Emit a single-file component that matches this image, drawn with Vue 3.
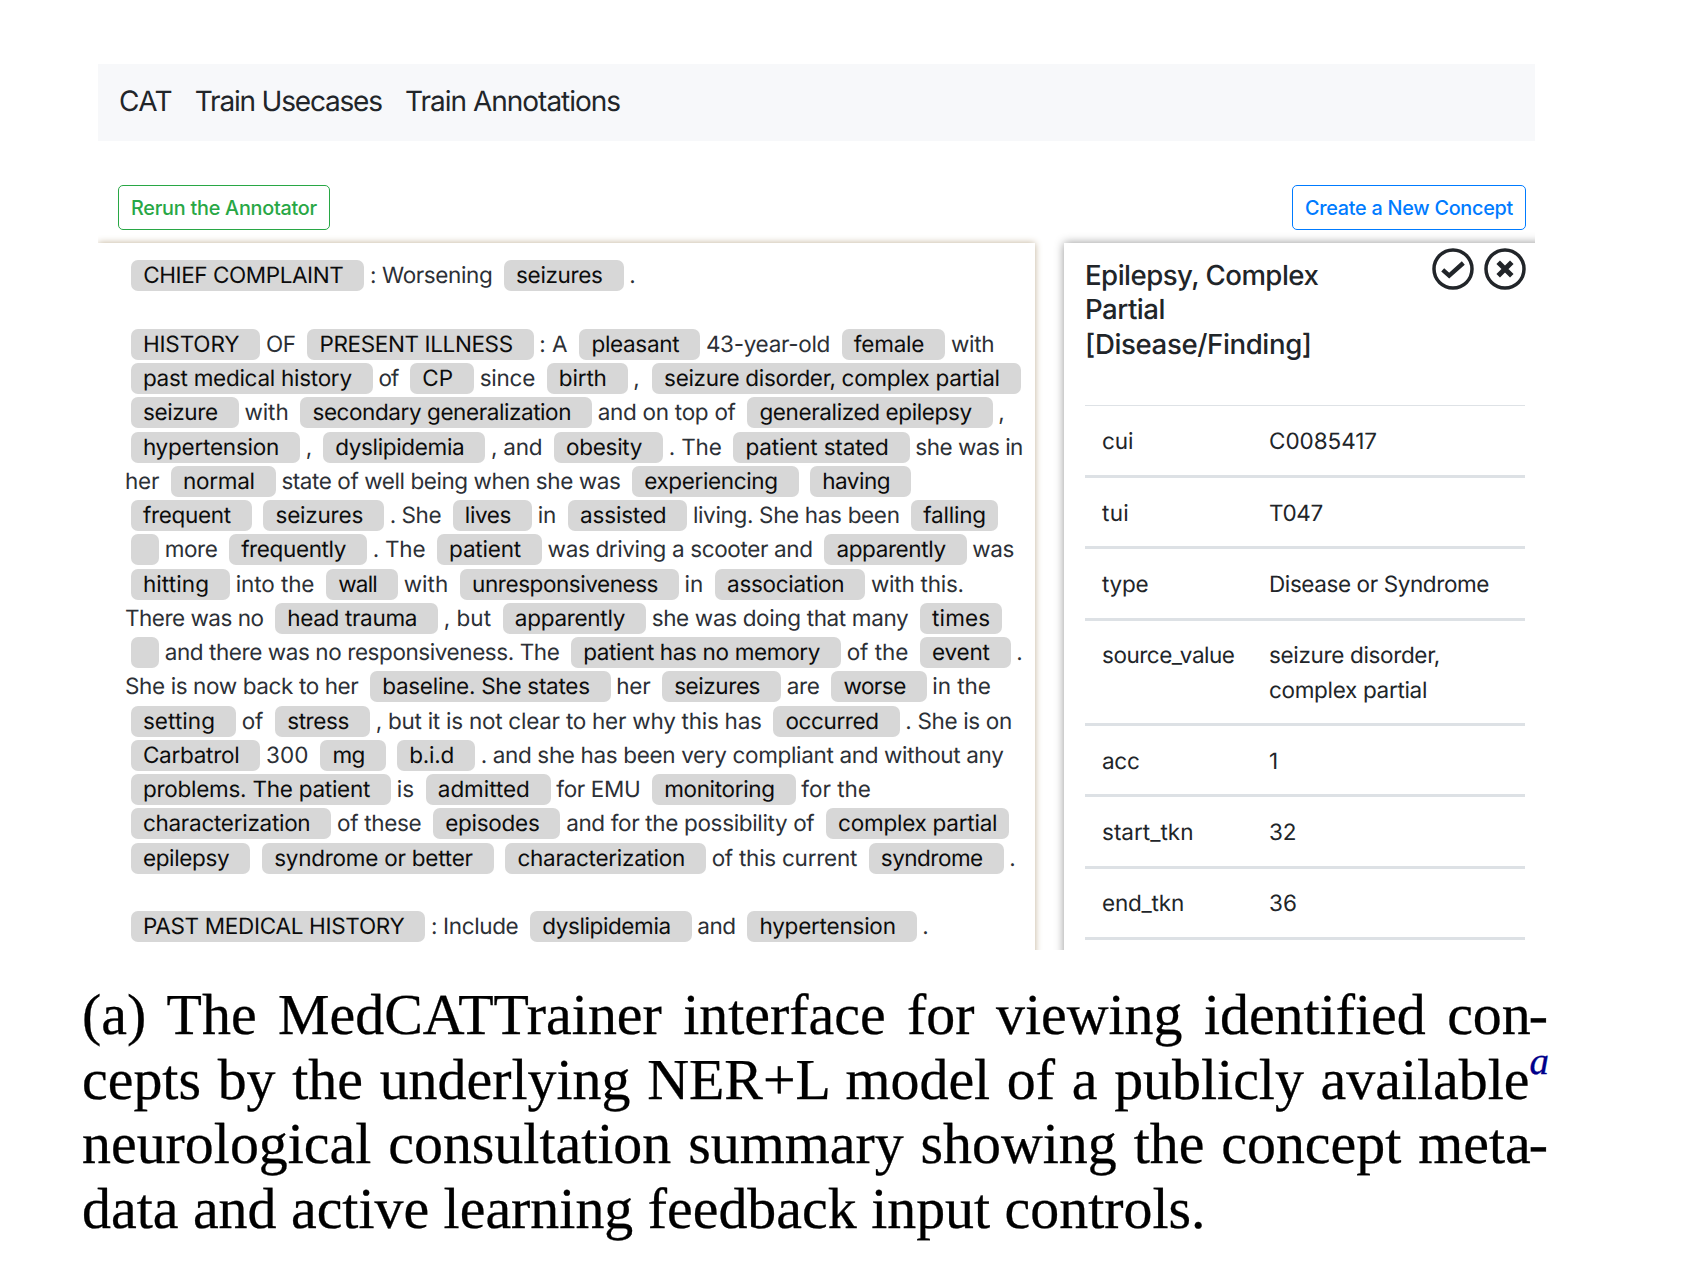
<script setup>
const BODY = '430 22.5px Inter'
const ctx = document.createElement('canvas').getContext('2d')

// Letter spacing that makes a run of text exactly `width` pixels wide
function track(text, width, font = BODY) {
  if (!text) return {}
  ctx.font = font
  const natural = ctx.measureText(text).width
  return { letterSpacing: ((width - natural) / text.length).toFixed(3) + 'px' }
}

// Each line: concepts are [text, start, end]; plain text is a string,
// a number closes a line that finishes with plain text.
const source = [
  [['CHIEF COMPLAINT', 131, 364.3], ': Worsening', ['seizures', 503.9, 623.6], '.', 637],
  [],
  [['HISTORY', 130.7, 260.3], 'OF', ['PRESENT ILLNESS', 307.3, 533.7], ': A', ['pleasant', 579.3, 700.3], '43-year-old', ['female', 841.7, 945.3], 'with', 994.5],
  [['past medical history', 130.7, 372.7], 'of', ['CP', 410, 474], 'since', ['birth', 546.7, 627.7], ',', ['seizure disorder, complex partial', 652, 1020.7]],
  [['seizure', 130.7, 238.7], 'with', ['secondary generalization', 300.3, 592], 'and on top of', ['generalized epilepsy', 747.3, 992.7], ',', 1005],
  [['hypertension', 130.7, 300], ',', ['dyslipidemia', 323, 485.3], ', and', ['obesity', 553.9, 663.2], '. The', ['patient stated', 733.3, 909.7], 'she was in', 1023],
  ['her', ['normal', 170.7, 275.7], 'state of well being when she was', ['experiencing', 632, 798.7], ['having', 810, 911]],
  [['frequent', 130.7, 251.7], ['seizures', 263.3, 384], '. She', ['lives', 452.7, 532], 'in', ['assisted', 568, 687.3], 'living. She has been', ['falling', 911.3, 998, 1]],
  [['', 130.7, 159], 'more', ['frequently', 229, 367], '. The', ['patient', 437, 542], 'was driving a scooter and', ['apparently', 824.3, 966.7], 'was', 1014],
  [['hitting', 130.7, 230], 'into the', ['wall', 326, 398], 'with', ['unresponsiveness', 460, 679], 'in', ['association', 715, 865.3], 'with this.', 964],
  ['There was no', ['head trauma', 275, 438], ', but', ['apparently', 502.7, 646], 'she was doing that many', ['times', 920, 1002.3, 1]],
  [['', 130.7, 159], 'and there was no responsiveness. The', ['patient has no memory', 571, 841], 'of the', ['event', 920, 1010.7], '.', 1023],
  ['She is now back to her', ['baseline. She states', 370, 610.7], 'her', ['seizures', 662, 781], 'are', ['worse', 831.3, 926.7], 'in the', 991],
  [['setting', 130.7, 236], 'of', ['stress', 275, 370], ', but it is not clear to her why this has', ['occurred', 773.3, 899.7], '. She is on', 1012],
  [['Carbatrol', 130.7, 260.3], '300', ['mg', 320.3, 385.7], ['b.i.d', 397, 475], '. and she has been very compliant and without any', 1003.5],
  [['problems. The patient', 130.7, 391], 'is', ['admitted', 425.7, 550.7], 'for EMU', ['monitoring', 652, 795.7], 'for the', 871],
  [['characterization', 130.7, 331.3], 'of these', ['episodes', 433, 560.5], 'and for the possibility of', ['complex partial', 826, 1009.3, 1]],
  [['epilepsy', 130.7, 250.3], ['syndrome or better', 262, 493.7], ['characterization', 505.3, 706], 'of this current', ['syndrome', 868.7, 1003.7], '.', 1017],
  [],
  [['PAST MEDICAL HISTORY', 130.7, 425.3], ': Include', ['dyslipidemia', 530, 691.7], 'and', ['hypertension', 747.3, 916.7], '.', 930],
]

const TEXT_LEFT = 125
const MARGIN = 5.7

function buildLine(tokens) {
  const out = []
  let x = TEXT_LEFT
  tokens.forEach((tok, i) => {
    if (typeof tok === 'number') return
    if (Array.isArray(tok)) {
      const [text, start, end, tight] = tok
      const inner = end - start - 12.2 - (tight ? 12 : 20.9)
      out.push({ chip: true, text, box: { width: end - start + 'px', marginLeft: start - x + 'px' }, fit: track(text, inner) })
      x = end
    } else {
      const next = tokens[i + 1]
      const origin = x === TEXT_LEFT ? x : x + MARGIN
      const limit = Array.isArray(next) ? next[1] - 11.6 : next
      const short = tok.length < 2
      out.push({ chip: false, text: tok, box: { width: limit - origin + 'px', marginLeft: origin - x + 'px' }, fit: short ? {} : track(tok, limit - origin) })
      x = limit
    }
  })
  return out
}

const lines = source.map(buildLine)

const nav = [
  { text: 'CAT', w: 53 },
  { text: 'Train Usecases', w: 187 },
  { text: 'Train Annotations', w: 215 },
]
const NAV = '420 28px Inter'
const BTN = '450 19.8px Inter'
const HEAD = '540 27.6px Inter'

const heading = [
  { text: 'Epilepsy, Complex', w: 233.5 },
  { text: 'Partial', w: 80 },
  { text: '[Disease/Finding]', w: 226.5 },
]

const rows = [
  { key: ['cui', 31.5], values: [['C0085417', 108]] },
  { key: ['tui', 27], values: [['T047', 54]] },
  { key: ['type', 46.5], values: [['Disease or Syndrome', 220]] },
  { key: ['source_value', 132.5], values: [['seizure disorder,', 171], ['complex partial', 158]] },
  { key: ['acc', 37.5], values: [['1', 12]] },
  { key: ['start_tkn', 91.5], values: [['32', 27.5]] },
  { key: ['end_tkn', 82], values: [['36', 28]] },
]
</script>

<template>
  <main class="page">
    <section class="app">
      <nav class="navbar">
        <a v-for="n in nav" :key="n.text" :style="track(n.text, n.w, NAV)">{{ n.text }}</a>
      </nav>
      <div class="toolbar">
        <button class="btn success"><span :style="track('Rerun the Annotator', 186, BTN)">Rerun the Annotator</span></button>
        <button class="btn primary"><span :style="track('Create a New Concept', 208, BTN)">Create a New Concept</span></button>
      </div>
      <div class="panels">
        <article class="document">
          <div v-for="(line, i) in lines" :key="i" class="line">
            <span v-for="(t, j) in line" :key="j" :class="t.chip ? 'concept' : 'plain'" :style="t.box"><span :style="t.fit">{{ t.text }}</span></span>
          </div>
        </article>
        <aside class="details">
          <header class="head">
            <h5>
              <span v-for="h in heading" :key="h.text" :style="track(h.text, h.w, HEAD)">{{ h.text }}</span>
            </h5>
            <div class="actions">
              <svg viewBox="-21 -21 42 42" width="42" height="42">
                <circle r="19" />
                <path class="tick" d="M-10.3 .8L-3.8 6.6L10.3-6" />
              </svg>
              <svg viewBox="-21 -21 42 42" width="42" height="42">
                <circle r="19" />
                <path class="cross" d="M-6.8-6.8L6.8 6.8M6.8-6.8L-6.8 6.8" />
              </svg>
            </div>
          </header>
          <div class="table">
            <div v-for="r in rows" :key="r.key[0]" class="row">
              <div class="key"><span :style="track(r.key[0], r.key[1])">{{ r.key[0] }}</span></div>
              <div class="value">
                <div v-for="v in r.values" :key="v[0]"><span :style="track(v[0], v[1])">{{ v[0] }}</span></div>
              </div>
            </div>
          </div>
        </aside>
      </div>
    </section>
    <div class="caption">
      <p>(a) The MedCATTrainer interface for viewing identified con<span class="hyphen">-</span></p>
      <p>cepts by the underlying NER+L model of a publicly available<sup>a</sup></p>
      <p>neurological consultation summary showing the concept meta<span class="hyphen">-</span></p>
      <p class="last">data and active learning feedback input controls.</p>
    </div>
  </main>
</template>

<style>
body {
  margin: 0;
  background: #fff;
}
</style>

<style scoped>
.page {
  box-sizing: border-box;
  width: 1686px;
  height: 1288px;
  padding: 64px 0 0 98px;
  overflow: hidden;
  background: #fff;
  font-family: Inter, "Liberation Sans", sans-serif;
  color: #212529;
  text-rendering: geometricPrecision;
}
.app {
  width: 1437px;
  height: 886px;
  overflow: hidden;
}
.navbar {
  box-sizing: border-box;
  display: flex;
  gap: 23.3px;
  height: 77px;
  padding-left: 21px;
  background: #f7f8fa;
  font-size: 28px;
  font-weight: 420;
  line-height: 75px;
  white-space: nowrap;
}
.navbar a:nth-child(1) {
  width: 52.5px;
}
.navbar a:nth-child(2) {
  width: 187px;
}
.toolbar {
  box-sizing: border-box;
  display: flex;
  justify-content: space-between;
  height: 102px;
  padding: 44px 9px 0 20px;
}
.btn {
  box-sizing: border-box;
  height: 45px;
  padding: 1px 0 0 12px;
  border: 1.5px solid;
  border-radius: 5px;
  background: #fff;
  font: 450 19.8px Inter, sans-serif;
  text-align: left;
  white-space: nowrap;
}
.success {
  width: 212px;
  color: #28a745;
}
.primary {
  width: 234px;
  color: #007bff;
}
.panels {
  display: flex;
  gap: 29px;
  height: 707px;
}
.document {
  flex: none;
  box-sizing: border-box;
  width: 937px;
  height: 760px;
  padding: 15.6px 0 0 27px;
  box-shadow: 0 0 7px #bfae94;
}
.line {
  display: flex;
  align-items: center;
  height: 34.27px;
  font-size: 22.5px;
  font-weight: 430;
  line-height: 32px;
  white-space: pre;
  color: #2c3036;
}
.concept {
  flex: none;
  box-sizing: border-box;
  height: 31px;
  padding-left: 12.2px;
  border-radius: 7px;
  background: #d7d7d7;
  color: #0c0c0c;
}
.plain {
  flex: none;
  height: 31px;
}
.details {
  flex: none;
  box-sizing: border-box;
  width: 490px;
  height: 760px;
  padding: 0 29px 0 21px;
  box-shadow: 0 0 9px #949494;
}
.head {
  display: flex;
  justify-content: space-between;
  height: 162px;
}
h5 {
  margin: 15px 0 0;
  font-size: 27.6px;
  font-weight: 540;
  line-height: 34.25px;
}
h5 span {
  display: block;
  white-space: nowrap;
}
.actions {
  display: flex;
  gap: 10px;
  padding-top: 5px;
  margin-right: -1px;
}
.actions svg {
  fill: none;
  stroke: #212529;
}
circle {
  stroke-width: 3.5;
}
.tick {
  stroke-width: 4.4;
}
.cross {
  stroke-width: 5;
}
.table {
  border-top: 1.5px solid #dee2e6;
}
.row {
  box-sizing: border-box;
  display: flex;
  padding: 18.8px 0 15.2px 17px;
  border-bottom: 3px solid #dde1e5;
  min-height: 71.3px;
  font-size: 22.5px;
  font-weight: 430;
  line-height: 34.25px;
  white-space: nowrap;
}
.row:first-child {
  padding-bottom: 15.9px;
}
.key {
  flex: none;
  width: 167px;
}
.caption {
  width: 1466px;
  margin: 33px 0 0 -16px;
  font: 57.9px/64.6px "Liberation Serif", serif;
  color: #000;
  -webkit-text-stroke: 0.3px #000;
}
.caption p {
  margin: 0;
  height: 64.6px;
  text-align: justify;
  text-align-last: justify;
  white-space: nowrap;
}
.caption .last {
  text-align-last: left;
}
.hyphen {
  margin-left: -2px;
}
sup {
  font-size: 39px;
  font-style: italic;
  line-height: 0;
  color: #00008b;
  -webkit-text-stroke-color: #00008b;
  vertical-align: 25px;
  margin-right: -1px;
}
</style>
